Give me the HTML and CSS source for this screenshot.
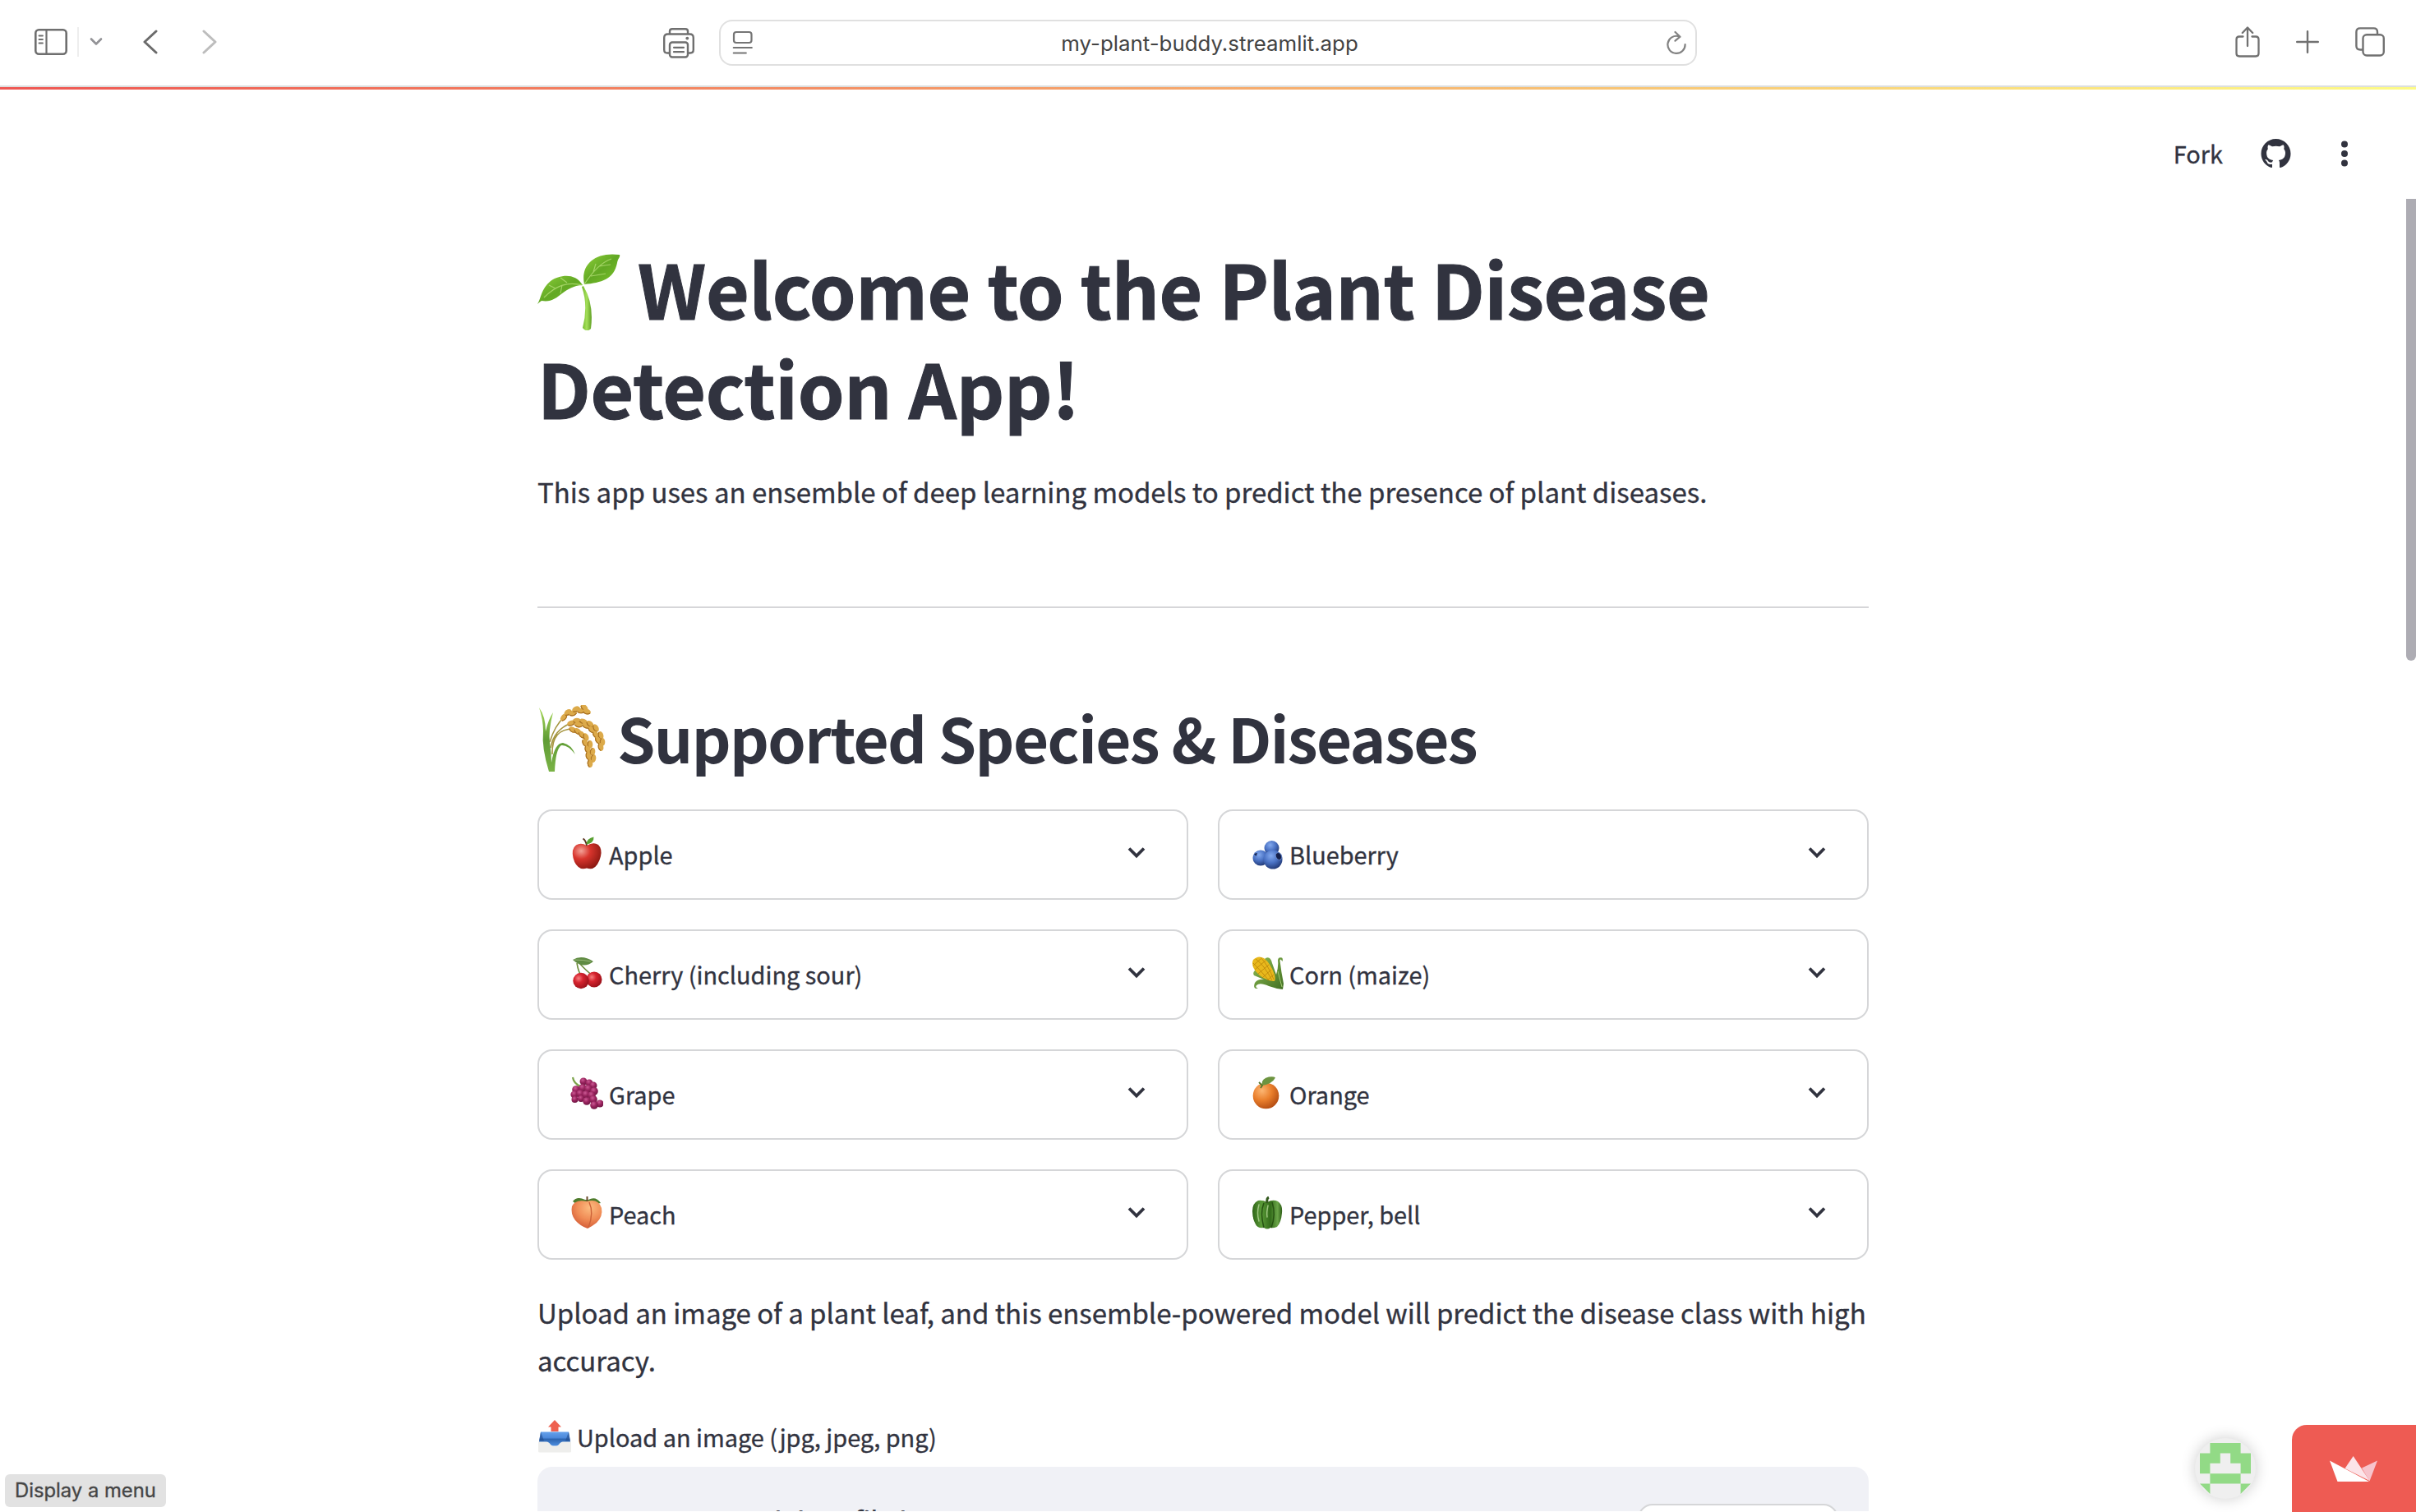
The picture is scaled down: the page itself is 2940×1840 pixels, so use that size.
FILE: index.html
```html
<!DOCTYPE html>
<html lang="en">
<head>
<meta charset="utf-8">
<title>Plant Disease Detection</title>
<link rel="stylesheet" href="styles.css">
</head>
<body>
<svg class="defs" width="0" height="0" aria-hidden="true">
  <defs>
    <linearGradient id="leafA" x1="0" y1="0" x2="1" y2="1"><stop offset="0" stop-color="#8fd13a"/><stop offset=".5" stop-color="#62a824"/><stop offset="1" stop-color="#7cc42c"/></linearGradient>
    <linearGradient id="stem" x1="0" y1="0" x2="1" y2="0"><stop offset="0" stop-color="#6fb52a"/><stop offset=".5" stop-color="#a5e05a"/><stop offset="1" stop-color="#5f9f22"/></linearGradient>
    <radialGradient id="red" cx=".3" cy=".3" r=".8"><stop offset="0" stop-color="#f3a196"/><stop offset=".4" stop-color="#d8352d"/><stop offset="1" stop-color="#86160f"/></radialGradient>
    <radialGradient id="cherry" cx=".35" cy=".35" r=".7"><stop offset="0" stop-color="#f77f80"/><stop offset=".4" stop-color="#d6232e"/><stop offset="1" stop-color="#991019"/></radialGradient>
    <radialGradient id="blue" cx=".4" cy=".3" r=".75"><stop offset="0" stop-color="#83a9ee"/><stop offset=".5" stop-color="#4a72c4"/><stop offset="1" stop-color="#1f3570"/></radialGradient>
    <radialGradient id="orange" cx=".35" cy=".3" r=".75"><stop offset="0" stop-color="#fcb673"/><stop offset=".5" stop-color="#ea7f2c"/><stop offset="1" stop-color="#b34c12"/></radialGradient>
    <radialGradient id="peach" cx=".6" cy=".25" r=".85"><stop offset="0" stop-color="#fcbc80"/><stop offset=".5" stop-color="#f08c56"/><stop offset="1" stop-color="#cc4f2f"/></radialGradient>
    <radialGradient id="grape" cx=".4" cy=".3" r=".7"><stop offset="0" stop-color="#cb5a94"/><stop offset=".5" stop-color="#9b2560"/><stop offset="1" stop-color="#6f1542"/></radialGradient>
    <linearGradient id="pepper" x1="0" y1="0" x2="1" y2="0"><stop offset="0" stop-color="#2f6418"/><stop offset=".3" stop-color="#5a9a38"/><stop offset=".6" stop-color="#336c1a"/><stop offset=".85" stop-color="#6aa548"/><stop offset="1" stop-color="#2d5d16"/></linearGradient>
    <linearGradient id="husk" x1="0" y1="0" x2="1" y2="1"><stop offset="0" stop-color="#8fbd55"/><stop offset="1" stop-color="#416f22"/></linearGradient>
    <linearGradient id="tray" x1="0" y1="0" x2="0" y2="1"><stop offset="0" stop-color="#66a2ec"/><stop offset=".45" stop-color="#4a86d8"/><stop offset=".5" stop-color="#2c63ad"/><stop offset="1" stop-color="#4e8ee0"/></linearGradient>
    <linearGradient id="blade" x1="0" y1="0" x2="0" y2="1"><stop offset="0" stop-color="#a9d95a"/><stop offset=".5" stop-color="#5f9c35"/><stop offset="1" stop-color="#7ab346"/></linearGradient>
    <g id="chev"><path d="M2 2.5 L11 11.5 L20 2.5" fill="none" stroke="#31333f" stroke-width="3.8"/></g>
    <g id="grain"><ellipse rx="5" ry="3.300" fill="#dcaa4a"/><path d="M-4.500 1Q0 4.500 4.500 1" fill="none" stroke="#a87022" stroke-width="1.200"/></g>
  </defs>
</svg>

<div class="toolbar">
  <div class="tools tools-left">
    <svg class="ic sidebar" width="40" height="32" viewBox="0 0 40 32" fill="none" stroke="#6f6f6f"><rect x="1.3" y="1.3" width="37.4" height="29.4" rx="4" stroke-width="2.6"/><path d="M14.5 1v30" stroke-width="2.2"/><path d="M5.5 8.5h4.5M5.5 13h4.5M5.5 17.5h4.5" stroke-width="1.8" stroke-linecap="round"/></svg>
    <span class="sep"></span>
    <svg class="ic menu" width="16" height="12" viewBox="0 0 16 12" fill="none" stroke="#929296" stroke-width="2.6" stroke-linecap="round" stroke-linejoin="round"><path d="M2 2.5l6 6 6-6"/></svg>
    <svg class="ic back" width="20" height="30" viewBox="0 0 20 30" fill="none" stroke="#6b6b6b" stroke-width="3" stroke-linecap="round" stroke-linejoin="round"><path d="M17 2L3 15l14 13"/></svg>
    <svg class="ic fwd" width="20" height="30" viewBox="0 0 20 30" fill="none" stroke="#bdbdbd" stroke-width="3" stroke-linecap="round" stroke-linejoin="round"><path d="M3 2l14 13L3 28"/></svg>
  </div>
  <svg class="ic printer" width="38" height="37" viewBox="0 0 38 37" fill="none" stroke="#6f6f6f" stroke-width="2.4"><path d="M8 8V4q0-2.8 3-2.8h16q3 0 3 2.8v4"/><path d="M8 30.500H5q-3.800 0-3.800-4V12q0-4.500 4.500-4.500h26.600q4.500 0 4.500 4.500v14.500q0 4-3.800 4h-3"/><rect x="8" y="17.500" width="22" height="18" rx="3"/><path d="M13 23.800h12M13 29.200h12" stroke-linecap="round" stroke-width="2.200"/><circle cx="29.300" cy="12.600" r="1.900" fill="#6f6f6f" stroke="none"/></svg>
  <div class="urlbar">
    <svg width="26" height="30" viewBox="0 0 26 30" fill="none" stroke="#757575" stroke-width="2.200"><rect x="2" y="2" width="21.500" height="13" rx="3"/><path d="M1.800 21h22M1.800 27.500h15" stroke-linecap="round"/></svg>
    <span class="url">my-plant-buddy.streamlit.app</span>
    <svg width="26" height="30" viewBox="0 0 26 30" fill="none" stroke="#828282" stroke-width="2.200" stroke-linecap="round" stroke-linejoin="round"><path d="M16 7.200A10.600 10.600 0 1 0 23.600 17M11.500 2l6 5.700-6 5"/></svg>
  </div>
  <div class="tools tools-right">
    <svg width="30" height="38" viewBox="0 0 30 38" fill="none" stroke="#717171" stroke-width="2.300" stroke-linecap="round" stroke-linejoin="round"><path d="M9.500 12.500H5q-3.500 0-3.500 3.500v17q0 3.500 3.500 3.500h20q3.500 0 3.500-3.500V16q0-3.500-3.500-3.500h-4.500M15 24V2M8.800 8L15 1.500 21.200 8"/></svg>
    <svg width="28" height="28" viewBox="0 0 28 28" fill="none" stroke="#717171" stroke-width="2.400" stroke-linecap="round"><path d="M14 1.200v25.600M1.200 14h25.600"/></svg>
    <svg width="36" height="36" viewBox="0 0 36 36" fill="none" stroke="#717171" stroke-width="2.400"><rect x="9.500" y="9.200" width="25.300" height="25.300" rx="4.500"/><path d="M9 27.500H6.200q-4.800 0-4.800-4.500V6Q1.400 1.400 6 1.400h16.500q4.500 0 4.500 4.500V9"/></svg>
  </div>
</div>
<div class="decoration"></div>

<div class="app">
  <header class="app-header">
    <span class="fork">Fork</span>
    <svg class="gh" width="37" height="36" viewBox="0 0 16 16" fill="#31333f"><path d="M8 0C3.580 0 0 3.580 0 8c0 3.540 2.290 6.530 5.470 7.590.4.070.55-.17.55-.38 0-.19-.01-.82-.01-1.490-2.010.37-2.530-.49-2.690-.94-.09-.23-.48-.94-.82-1.130-.28-.15-.68-.52-.01-.53.63-.01 1.080.58 1.230.82.72 1.210 1.870.87 2.330.66.070-.52.280-.87.510-1.070-1.780-.2-3.640-.89-3.640-3.950 0-.87.310-1.590.82-2.150-.08-.2-.36-1.020.08-2.120 0 0 .67-.21 2.200.82.640-.18 1.320-.27 2-.27s1.360.09 2 .27c1.530-1.040 2.200-.82 2.200-.82.440 1.100.16 1.920.08 2.120.51.56.82 1.270.82 2.150 0 3.070-1.870 3.750-3.650 3.950.29.250.54.730.54 1.480 0 1.070-.01 1.930-.01 2.200 0 .21.150.46.55.38A8.010 8.010 0 0 0 16 8c0-4.420-3.580-8-8-8z"/></svg>
    <svg class="dots" width="10" height="32" viewBox="0 0 10 32" fill="#31333f"><circle cx="5" cy="4.500" r="4"/><circle cx="5" cy="16" r="4"/><circle cx="5" cy="27.500" r="4"/></svg>
  </header>

  <main class="main">
    <h1 class="title"><svg class="seed" width="102" height="94" viewBox="0 0 102 94"><path d="M56 40Q69 62 65 92Q60 97 55 91Q62 64 54 41Z" fill="url(#stem)"/><path d="M57 38C52 14 70-2 100 2C101 5 98 6 97 12C93 32 78 36 57 38Z" fill="url(#leafA)"/><path d="M55 39C46 24 28 26 16 34C4 44 5 54 0 62Q2 60 5 58C26 62 30 40 55 39Z" fill="url(#leafA)"/><path d="M57 38C66 24 76 12 90 7M68 23l3-10M75 16l14-2M65 28l18-3M55 39C36 34 22 40 8 54M36 36l-8-6M30 39l-2 10M22 43l-8-4" fill="none" stroke="#b3dd75" stroke-width="1.200" opacity=".8"/></svg><span>Welcome to the Plant Disease</span><br><span>Detection App!</span></h1>
    <p class="lead">This app uses an ensemble of deep learning models to predict the presence of plant diseases.</p>
    <hr class="rule">
    <h2 class="subtitle"><svg class="rice" width="82" height="82" viewBox="0 0 82 82"><g fill="none" stroke="#a5953f" stroke-width="1.600"><path d="M14 45Q20 25 32 14Q44 6 58 6M15 52Q19 30 40 22Q66 16 76 48M17 60Q16 28 44 29Q62 36 63 70"/></g><path d="M1 3Q9 14 9 32Q12 18 18 9Q12 32 14 46Q16 58 16 70Q20 46 30 46Q40 48 45 60Q36 48 28 49Q21 54 20 81H13Q4 52 6 32Q6 18 1 3Z" fill="url(#blade)"/><use href="#grain" transform="translate(31 15) rotate(-50)"/><use href="#grain" transform="translate(36 9) rotate(-35)"/><use href="#grain" transform="translate(42 10) rotate(-15)"/><use href="#grain" transform="translate(46 5) rotate(-25)"/><use href="#grain" transform="translate(52 7)"/><use href="#grain" transform="translate(56 3) rotate(40)"/><use href="#grain" transform="translate(59 8) rotate(15)"/><use href="#grain" transform="translate(40 22) rotate(-20)"/><use href="#grain" transform="translate(47 19)"/><use href="#grain" transform="translate(49 24) rotate(10)"/><use href="#grain" transform="translate(55 20) rotate(20)"/><use href="#grain" transform="translate(58 25) rotate(25)"/><use href="#grain" transform="translate(63 23) rotate(40)"/><use href="#grain" transform="translate(65 30) rotate(40)"/><use href="#grain" transform="translate(70 28) rotate(60)"/><use href="#grain" transform="translate(70 36) rotate(55)"/><use href="#grain" transform="translate(76 37) rotate(75)"/><use href="#grain" transform="translate(73 43) rotate(55)"/><use href="#grain" transform="translate(78 45) rotate(90)"/><use href="#grain" transform="translate(76 51) rotate(75)"/><use href="#grain" transform="translate(42 30) rotate(30)"/><use href="#grain" transform="translate(48 32) rotate(40)"/><use href="#grain" transform="translate(53 36) rotate(50)"/><use href="#grain" transform="translate(58 39) rotate(70)"/><use href="#grain" transform="translate(57 46) rotate(60)"/><use href="#grain" transform="translate(63 48) rotate(90)"/><use href="#grain" transform="translate(60 54) rotate(70)"/><use href="#grain" transform="translate(66 57) rotate(100)"/><use href="#grain" transform="translate(61 62) rotate(75)"/><use href="#grain" transform="translate(67 65) rotate(100)"/><use href="#grain" transform="translate(63 71) rotate(85)"/></svg><span>Supported Species &amp; Diseases</span></h2>

    <section class="grid">
      <div class="card"><svg class="em" viewBox="0 0 40 40"><path d="M20 11Q28 6 34 10Q39 15 37 24Q34 36 27 39Q23 39.500 20 38.500Q17 39.500 13 39Q6 36 3.500 26Q1 15 7 10.500Q13 7 20 11Z" fill="url(#red)"/><path d="M20 11Q19 5 15.500 2.500" fill="none" stroke="#5c3620" stroke-width="2"/><path d="M19.500 9.500Q20 2 28.500.5Q29 8 19.500 9.500Z" fill="#58a031"/></svg><span class="name">Apple</span><svg class="chev" width="22" height="16"><use href="#chev"/></svg></div>
      <div class="card"><svg class="em" viewBox="0 0 40 40"><circle cx="25.500" cy="14" r="9" fill="url(#blue)"/><circle cx="12" cy="26" r="9.500" fill="url(#blue)"/><circle cx="27" cy="28" r="11.500" fill="url(#blue)"/><ellipse cx="34" cy="24" rx="3.500" ry="4.500" transform="rotate(-25 34 24)" fill="#15204a" stroke="#6786c8" stroke-width="1"/><path d="M4 21l4-1-1.500 4z" fill="#15204a"/></svg><span class="name">Blueberry</span><svg class="chev" width="22" height="16"><use href="#chev"/></svg></div>
      <div class="card"><svg class="em" viewBox="0 0 40 40"><path d="M8 8Q10 20 14 24M10 7Q20 18 27 23" fill="none" stroke="#6f8d3d" stroke-width="1.600"/><path d="M3 4Q14-3 28 6Q16 16 3 4Z" fill="#608b43"/><path d="M5 4Q16 4 25 6" stroke="#98b878" fill="none"/><circle cx="29" cy="28" r="9.500" fill="url(#cherry)"/><circle cx="13" cy="29.500" r="9.700" fill="url(#cherry)"/></svg><span class="name">Cherry (including sour)</span><svg class="chev" width="22" height="16"><use href="#chev"/></svg></div>
      <div class="card"><svg class="em" viewBox="0 0 40 40"><path d="M18 2Q24-1 26 8L31 22Q34 12 33 5Q33 0 38 1.500Q39.500 3 38.500 6Q36 1.500 35.500 5Q37 18 40 33L39 40Q30 39 22 36Q11 31 7 35Q5 38 9 39Q2 40 5 32Q9 27 16 28L4 23Q2 20 5 17Z" fill="url(#husk)"/><path d="M3 4Q9-2 16 2Q24 8 29 22Q31 31 27 30Q14 28 6 18Q0 10 3 4Z" fill="#e8b81c"/><path d="M6 3Q16 10 26 29M12 1Q22 12 28 28M3 8Q12 17 22 29M3 11L12 3M5 16L18 5M9 21L22 10M14 26L25 16M20 29L28 22" fill="none" stroke="#b98409" stroke-width=".8"/><path d="M33 18Q36 30 38 37" stroke="#a5cc72" stroke-width="1" fill="none"/></svg><span class="name">Corn (maize)</span><svg class="chev" width="22" height="16"><use href="#chev"/></svg></div>
      <div class="card"><svg class="em" viewBox="0 0 40 40"><path d="M3 1Q4 8 12 12" stroke="#7ba34a" stroke-width="2.200" fill="none"/><g fill="url(#grape)"><circle cx="16" cy="6" r="4.500"/><circle cx="23" cy="8" r="4.500"/><circle cx="28" cy="11" r="4.500"/><circle cx="7" cy="16" r="4.800"/><circle cx="15" cy="14" r="4.800"/><circle cx="22" cy="15" r="4.800"/><circle cx="29" cy="18" r="4.800"/><circle cx="5" cy="22" r="4.600"/><circle cx="12" cy="21" r="4.800"/><circle cx="19" cy="22" r="4.800"/><circle cx="26" cy="23" r="4.800"/><circle cx="5.500" cy="28" r="4"/><circle cx="13" cy="27" r="4"/><circle cx="20" cy="30" r="4.800"/><circle cx="28" cy="28" r="4.800"/><circle cx="36" cy="33" r="4.600"/><circle cx="29" cy="35" r="4.800"/></g></svg><span class="name">Grape</span><svg class="chev" width="22" height="16"><use href="#chev"/></svg></div>
      <div class="card"><svg class="em" viewBox="0 0 40 40"><circle cx="18.500" cy="23.500" r="15.800" fill="url(#orange)"/><path d="M14 11Q12 3 22 .5Q28-.5 30 1.500Q26 9 14 11Z" fill="#6d9440"/><path d="M10 7l4 4-2 3" stroke="#56782c" stroke-width="1.800" fill="none"/></svg><span class="name">Orange</span><svg class="chev" width="22" height="16"><use href="#chev"/></svg></div>
      <div class="card"><svg class="em" viewBox="0 0 40 40"><path d="M3 6Q8-1 18 4L22 4Q31-1 37 8L28 10H8Z" fill="#4d7b2b"/><path d="M20 6Q34 2 38 14Q40 24 32 32Q27 36 21 39Q12 36 6 29Q0 21 2 12Q6 3 20 6Z" fill="url(#peach)"/><path d="M23 7Q29 20 22 38" fill="none" stroke="#cc6238" stroke-width="1.400"/><path d="M20.500 0v6" stroke="#6b4a2a" stroke-width="2"/></svg><span class="name">Peach</span><svg class="chev" width="22" height="16"><use href="#chev"/></svg></div>
      <div class="card"><svg class="em" viewBox="0 0 40 40"><path d="M9 5Q14 4 20 7Q27 3 33 6Q39 10 38 20Q37 32 32 37Q27 39 24 38Q20 41 16 38Q8 39 6 34Q2 27 2 18Q2 8 9 5Z" fill="url(#pepper)"/><path d="M16 8Q11 20 16 38M26 7Q31 22 25 38" fill="none" stroke="#265212" stroke-width="1.500"/><path d="M10 10Q7 20 10 30M21 11Q19 20 20 25" fill="none" stroke="#9cc57f" stroke-width="1.500" stroke-linecap="round"/><path d="M20 8Q19 2 22 1" stroke="#33591e" stroke-width="3" fill="none"/></svg><span class="name">Pepper, bell</span><svg class="chev" width="22" height="16"><use href="#chev"/></svg></div>
    </section>

    <p class="info">Upload an image of a plant leaf, and this ensemble-powered model will predict the disease class with high<br>accuracy.</p>
    <div class="label"><svg width="40" height="40" viewBox="0 0 40 40"><path d="M20 0l8 8.500h-3.500V14h-9V8.500H12z" fill="#ee604f"/><path d="M3 14.500h34l2 12-4 5H5l-4-5z" fill="url(#tray)"/><path d="M3 14.500l4 11H1zM37 14.500l-4 11h6z" fill="#1f4a8a" opacity=".6"/><path d="M0 26.500h10q3 0 5 3.500 5 4.500 10 0 2-3.500 5-3.500h10V38q0 1.500-1.500 1.500h-37Q0 39.500 0 38z" fill="#eeeeec"/></svg><span>Upload an image (jpg, jpeg, png)</span></div>
    <div class="uploader"><span class="drop">Drag and drop file here</span><div class="browse"></div></div>
  </main>
</div>

<div class="scrollbar"></div>
<div class="avatar"><svg width="62" height="62" viewBox="0 0 5 5" fill="#92da86"><path d="M1 0h3v1h1v2H4V2H3V1H2v1H1v1H0V1h1zM1 3h3v1H1zM0 4h1v1zM4 4h1L4 5z"/></svg></div>
<div class="badge"><svg width="58" height="32" viewBox="0 0 58 32"><path d="M0 5.500L48 31H9.500z" fill="#fff"/><path d="M18.500 15L28.700 0 48.500 30z" fill="#fce4e9"/><path d="M39 14.500L58 5.500 48.500 30.500z" fill="#f7c4cc"/></svg></div>
<div class="status">Display a menu</div>
</body>
</html>
```

FILE: styles.css
```css
* { box-sizing: border-box; }
html, body { margin: 0; padding: 0; }
body {
  width: 2940px;
  height: 1840px;
  overflow: hidden;
  position: relative;
  background: #fff;
  color: #31333f;
  font-family: "Noto Sans CJK SC", "Noto Sans", sans-serif;
  -webkit-text-stroke: 0.35px currentColor;
}
svg { display: block; flex: none; }
.defs { position: absolute; }

.toolbar {
  display: flex;
  align-items: center;
  height: 106px;
  padding: 0 38px 0 42px;
  border-bottom: 2px solid #dcdfdf;
}
.tools { display: flex; align-items: center; }
.tools-left { width: 765px; padding-bottom: 2px; }
.sep { width: 2px; height: 36px; margin: 0 13px 0 12px; background: #eeeeee; }
.back { margin-left: 48px; }
.fwd { margin-left: 52px; }
.printer { margin-right: 30px; }
.urlbar {
  display: flex;
  align-items: center;
  justify-content: space-between;
  width: 1190px;
  height: 56px;
  padding: 0 10px 0 14px;
  border: 2px solid #e0e0e0;
  border-radius: 16px;
}
.url { font: 25.850px Inter, sans-serif; color: #434343; -webkit-text-stroke: 0; }
.tools-right { margin-left: auto; gap: 44px; padding-bottom: 2px; }
.decoration { height: 3px; background: linear-gradient(90deg, #ee5753, #fdfb87); }

.app-header {
  display: flex;
  align-items: center;
  justify-content: flex-end;
  height: 155px;
  padding: 0 82px 0 0;
}
.fork { font-size: 28.900px; margin-right: 46px; padding-bottom: 1px; }
.gh { margin-right: 60px; }

.main { width: 1620px; margin-left: 654px; padding-top: 26px; }
.title {
  margin: 0;
  font-size: 90.900px;
  line-height: 120.500px;
  font-weight: 700;
  letter-spacing: -0.28px;
  white-space: nowrap;
  -webkit-text-stroke: 1px currentColor;
}
.seed { display: inline-block; margin-right: 20px; vertical-align: -13px; }
.lead { margin: 38px 0 0; font-size: 33px; line-height: 59px; letter-spacing: -0.02px; white-space: nowrap; }
.rule { height: 2px; margin: 110px 0 0; border: 0; background: #d6d6d9; }
.subtitle {
  display: flex;
  align-items: center;
  margin: 107px 0 39px;
  font-size: 74.400px;
  line-height: 99px;
  font-weight: 600;
  letter-spacing: -1.580px;
  white-space: nowrap;
  -webkit-text-stroke: 0;
}
.rice { margin: 4px 14px 0 1px; }

.grid { display: grid; grid-template-columns: 792px 792px; gap: 36px; }
.card {
  display: flex;
  align-items: center;
  height: 110px;
  padding: 0 50px 4px 38px;
  border: 2px solid #d5d6d8;
  border-radius: 18px;
}
.em { width: 40px; height: 40px; margin-right: 7px; }
.name { font-size: 28.900px; line-height: 52px; padding-top: 1px; white-space: nowrap; }
.chev { margin-left: auto; }

.info { margin: 35px 0 0; font-size: 33px; line-height: 58px; letter-spacing: -0.03px; white-space: nowrap; }
.label { display: flex; align-items: center; gap: 7px; height: 52px; margin: 38px 0 11px 1px; font-size: 28.900px; }
.uploader {
  display: flex;
  justify-content: space-between;
  height: 54px;
  padding: 39px 37px 0 159px;
  overflow: hidden;
  border-radius: 18px 18px 0 0;
  background: #f0f1f6;
}
.drop { font-size: 33px; line-height: 53px; }
.browse {
  width: 244px;
  height: 92px;
  margin-top: 6px;
  border: 2px solid #d5d6d8;
  border-radius: 18px;
  background: #fff;
}

.scrollbar { position: absolute; top: 242px; right: 0; width: 12px; height: 562px; border-radius: 0 0 6px 6px; background: #adacb3; }
.avatar {
  position: absolute;
  left: 2671px;
  top: 1750px;
  display: grid;
  place-items: center;
  width: 74px;
  height: 74px;
  border-radius: 50%;
  background: #efefef;
  box-shadow: 0 0 18px rgba(0, 0, 0, .2);
}
.badge {
  position: absolute;
  right: 0;
  bottom: 0;
  width: 151px;
  height: 106px;
  padding: 38px 0 0 46px;
  border-radius: 18px 0 0 0;
  background: #ee5b53;
}
.status {
  position: absolute;
  left: 6px;
  top: 1794px;
  width: 196px;
  height: 40px;
  padding-left: 12px;
  border-radius: 6px;
  background: #e2e2e2;
  color: #464646;
  font: 23.800px/40px Inter, sans-serif;
  white-space: nowrap;
}
```
